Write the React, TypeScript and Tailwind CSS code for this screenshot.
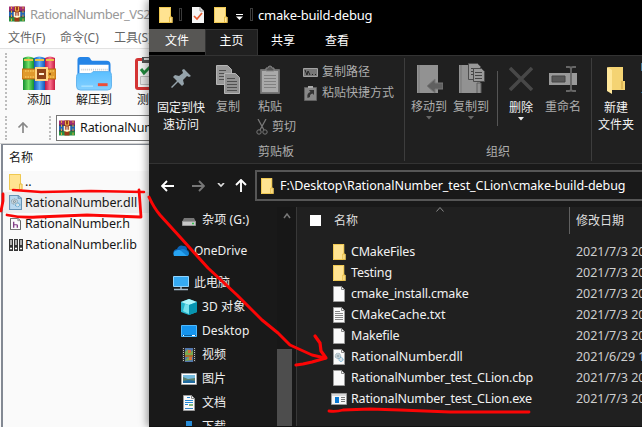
import type { ReactNode } from 'react';

const cjk = 'font-["Noto_Sans","Noto_Sans_CJK_SC",sans-serif]';

function Label({ children, className = '' }: { children: ReactNode; className?: string }) {
  return <span className={`block whitespace-nowrap leading-4 ${className}`}>{children}</span>;
}

function Folder({ className = 'w-4 h-4' }: { className?: string }) {
  return (
    <svg viewBox="0 0 14 16" preserveAspectRatio="none" className={`block shrink-0 ${className}`}>
      <path d="M0 0h12v10h1.500v6H0z" fill="#ffe391" />
      <path d="M.5.5h11V10M.5 0v15.500h12" fill="none" stroke="#efc850" />
      <path d="M10.500 10h2.500v5.500h-2.500z" fill="#ffe69b" stroke="#e7bc45" />
    </svg>
  );
}

function Books({ className }: { className: string }) {
  return (
    <svg viewBox="0 0 32 32" className={`block shrink-0 ${className}`}>
      <path d="M0 1h32v9H0z" fill="#a22d72" />
      <path d="M0 11h32v10H0z" fill="#2365b3" />
      <path d="M0 22h32v9H0z" fill="#279242" />
      <path d="M0 10.5h32M0 21.5h32" stroke="#29223c" strokeWidth="2" />
      <path d="M5 1v30M28 1v30" stroke="#e5ac3b" strokeWidth="2" strokeDasharray="5 3" />
      <path d="M11 1h10v30H11z" fill="#9c3a18" />
      <path d="M13 1v9h6V1M13 23h6" fill="none" stroke="#e9b047" strokeWidth="2" />
      <path d="M11 12v9h10v-9" fill="none" stroke="#fff2cf" strokeWidth="3" />
      <path d="M16 13v10" stroke="#fff" strokeWidth="2" />
    </svg>
  );
}

function ArchiveIcon() {
  return (
    <svg viewBox="0 0 34 35" className="block h-[35px] w-[34px] shrink-0">
      <defs>
        <linearGradient id="gr"><stop stopColor="#128d30" /><stop offset=".5" stopColor="#72df66" /><stop offset="1" stopColor="#149231" /></linearGradient>
        <linearGradient id="bl"><stop stopColor="#1057b8" /><stop offset=".5" stopColor="#5cadf8" /><stop offset="1" stopColor="#1458b7" /></linearGradient>
        <linearGradient id="rd"><stop stopColor="#bd1748" /><stop offset=".5" stopColor="#fb718d" /><stop offset="1" stopColor="#c71b42" /></linearGradient>
      </defs>
      <path d="M1 2q5-3 11 0v32H1z" fill="url(#gr)" />
      <path d="M12 2q5-3 11 0v32H12z" fill="url(#bl)" />
      <path d="M23 2q5-3 10 0v32H23z" fill="url(#rd)" />
      <path d="M2 4h9M13 4h9M24 4h8" stroke="#e8c448" strokeWidth="2" />
      <path d="M0 13h34v10H0z" fill="#e09a2d" stroke="#b9670f" />
      <path d="M3 15h29M3 21h29" stroke="#ffdb74" strokeDasharray="1.5 1" />
      <path d="M14 12h11v12H14z" fill="#8d4419" stroke="#ffd783" strokeWidth="2" />
      <path d="M17 18h5" stroke="#fff2d3" strokeWidth="2" />
      <circle cx="28" cy="18" r="1" fill="#76400d" />
    </svg>
  );
}

function ExtractIcon() {
  return (
    <svg viewBox="0 0 36 36" className="block h-[35px] w-9 shrink-0">
      <defs><linearGradient id="ef" x2="0" y2="1"><stop stopColor="#5abfff" /><stop offset="1" stopColor="#84d0ff" /></linearGradient></defs>
      <path d="M1 7V4q0-3 3-3h8q2 0 3 3l1 1h15q4 0 4 4v16H1z" fill="#2585e7" />
      <path d="M3 9h30v16H3z" fill="#fff" />
      <path d="M5 14h27" stroke="#c7ccd1" strokeWidth="2" strokeDasharray="1 1" />
      <path d="M3 18h11q2 0 3-2h16q3 0 3 4v11q0 4-4 4H4q-4 0-4-4V21q0-3 3-3z" fill="url(#ef)" stroke="#63b4ed" />
      <path d="M22 29.500h10" stroke="#ed4d38" strokeWidth="3" />
      <path d="M5 31h12" stroke="#c0ebff" />
    </svg>
  );
}

function TestIcon() {
  return (
    <svg viewBox="0 0 28 35" className="block h-[35px] w-7 shrink-0">
      <rect x="0" y="2" width="28" height="32" rx="3" fill="#d43434" />
      <path d="M3 5h22v26H3z" fill="#f5f5f5" />
      <path d="M7 1h14v6H7z" fill="#555" />
      <path d="M9 3h10" stroke="#ddd" strokeWidth="2" />
      <path d="M5.500 20.500h9v8h-9z" fill="#e8e8e8" stroke="#bbb" />
      <path d="m6 13 3 4 8-8" fill="none" stroke="#218a3d" strokeWidth="3" />
    </svg>
  );
}

type PageKind = 'blank' | 'text' | 'dll' | 'blueDll' | 'word' | 'header';
function Page({ kind = 'blank', className = 'w-3 h-4' }: { kind?: PageKind; className?: string }) {
  const blue = kind === 'blueDll';
  return (
    <svg viewBox="0 0 12 16" preserveAspectRatio="none" className={`block shrink-0 ${className}`}>
      <path d="M.5.5h8l3 3v12H.5z" fill={blue ? '#b9d8ef' : '#fafafa'} stroke={blue ? '#6693b5' : kind === 'header' ? '#444' : '#9b9b9b'} />
      <path d="M8.5.5v3h3" fill="none" stroke={blue ? '#6693b5' : '#888'} />
      {kind === 'text' && <path d="M2 4.5h5M2 6.5h8M2 8.5h8M2 10.5h8M2 12.5h8" stroke="#888" />}
      {(kind === 'dll' || blue) && (
        <g fill="#d6e2e8" stroke="#8297a2">
          <circle cx="5" cy="7" r="2.7" strokeDasharray="1 .5" /><circle cx="5" cy="7" r="1" fill="#fff" />
          <circle cx="8" cy="10.5" r="2" stroke="#5ca4cc" strokeDasharray="1 .5" />
        </g>
      )}
      {kind === 'header' && <path d="M4 5v8M4 9h3q1 0 1 1v3" fill="none" stroke="#813d85" strokeWidth="1.5" />}
      {kind === 'word' && <><path d="M4 2.5h3M2 5.5h8M2 7.5h8M2 9.5h3" stroke="#2488d5" /><path d="M6 9h4v2H6z" fill="#82b778" /><path d="M2 13.5h8" stroke="#3584c5" /></>}
    </svg>
  );
}

function LibIcon() {
  return (
    <svg viewBox="0 0 14 12" className="block h-3 w-3.5 shrink-0">
      <path d="M0 0h4v12H0zM5 0h4v12H5zM10 0h4v12h-4z" fill="#343434" />
      <path d="M2 1v5M7 1v5M12 1v5" stroke="#fff" strokeWidth="1.2" />
      <path d="M1 9.5h2M6 9.5h2M11 9.5h2" stroke="#fff" strokeWidth="1.5" />
    </svg>
  );
}

function Dots({ className = '' }: { className?: string }) {
  return <div className={`w-0 shrink-0 border-l-2 border-dotted border-[#bdbdbd] ${className}`} />;
}

function ArchiveWindow() {
  const files = [
    { name: '..', icon: <Folder className="h-4 w-[14px]" />, spacing: '' },
    { name: 'RationalNumber.dll', icon: <Page kind="blueDll" className="h-[15px] w-[13px]" />, spacing: 'tracking-[-.01px]' },
    { name: 'RationalNumber.h', icon: <Page kind="header" className="h-3 w-[11px]" />, spacing: 'tracking-[-.06px]' },
    { name: 'RationalNumber.lib', icon: <LibIcon />, spacing: 'tracking-[-.03px]' },
  ];
  return (
    <section className="flex h-full w-[149px] shrink-0 flex-col overflow-hidden bg-[#fafafa] text-[#161616]">
      <header className="flex h-7 shrink-0 items-center gap-[5px] bg-white pl-[9px]">
        <Books className="h-4 w-4" />
        <Label className="text-[13px] tracking-[-.48px] text-[#999]">RationalNumber_VS2</Label>
      </header>
      <nav className="flex h-5 shrink-0 items-center bg-white pl-2 text-[12px] text-[#666]">
        <Label className="w-[52px] shrink-0">文件(F)</Label><Label className="w-[54px] shrink-0">命令(C)</Label><Label>工具(S)</Label>
      </nav>
      <div className="flex h-16 shrink-0 border-t border-[#e2e2e2] pl-[5px] pt-1">
        <Dots className="h-[57px]" />
        <div className="ml-[14px] flex w-9 shrink-0 flex-col items-center pt-[3px]"><ArchiveIcon /><Label className="mt-px text-[12px]">添加</Label></div>
        <div className="ml-[19px] flex w-9 shrink-0 flex-col items-center pt-[3px]"><ExtractIcon /><Label className="mt-px text-[12px]">解压到</Label></div>
        <div className="ml-[23px] flex w-7 shrink-0 flex-col pt-[3px]"><TestIcon /><Label className="mt-px pl-0.5 text-[12px]">测试</Label></div>
      </div>
      <div className="flex h-8 shrink-0 items-center border-b border-[#d2d2d2] pl-[5px]">
        <Dots className="h-6" />
        <svg viewBox="0 0 12 12" className="ml-[10px] h-3 w-3 shrink-0"><path d="M6 11V1M1.5 5.5 6 1l4.500 4.500" fill="none" stroke="#888" strokeWidth="1.7" /></svg>
        <Dots className="ml-5 h-6" />
        <div className="ml-[5px] flex h-[26px] w-28 shrink-0 items-center gap-[5px] border border-[#777] bg-white pl-0.5"><Books className="h-4 w-4" /><Label className="text-[12.500px] tracking-[-.1px]">RationalNumber</Label></div>
      </div>
      <div className="ml-px flex-1 border-l-2 border-t border-[#838993]">
        <div className="flex h-[26px] items-center bg-white pl-[6px]"><Label className="text-[12px]">名称</Label></div>
        {files.map((f, i) => (
          <div key={f.name} className={`flex h-[21px] items-center pl-[4px] ${i === 1 ? 'bg-[#eee]' : 'bg-[#fafafa]'}`}>
            <span className="flex w-[17px] shrink-0 items-center justify-center">{f.icon}</span>
            <Label className={`ml-px text-[12.500px] ${f.spacing}`}>{f.name}</Label>
          </div>
        ))}
      </div>
    </section>
  );
}

function CopyIcon() {
  return (
    <svg viewBox="0 0 24 29" className="h-[29px] w-6">
      <path d="M.5.5h11l4 4v15H.5z" fill="#999" stroke="#b5b5b5" /><path d="M3 5.5h7M3 8.500h8M3 11.500h8M3 14.500h8" stroke="#505050" />
      <path d="M8.500 8.500h11l4 4v16h-15z" fill="#929292" stroke="#b5b5b5" /><path d="M11 13.500h8M11 16.500h10M11 19.500h10M11 22.500h10M11 25.500h10" stroke="#505050" />
    </svg>
  );
}

function PasteIcon() {
  return (
    <svg viewBox="0 0 20 29" className="h-[29px] w-5">
      <path d="M.5 4.500h19v24H.5z" fill="#777" stroke="#6b6b6b" /><path d="M2 6h16v21H2z" fill="#aaa" />
      <path d="M6 6V3h2q0-2 2-2t2 2h2v3z" fill="#555" stroke="#888" /><path d="M4 10.500h12M4 13.500h12M4 16.500h12M4 19.500h12M4 22.500h12" stroke="#818181" />
    </svg>
  );
}

function TargetIcon({ copy = false }: { copy?: boolean }) {
  return (
    <svg viewBox="0 0 27 31" className="h-[31px] w-[27px]">
      <path d="M1 2h21v28H1z" fill="#929292" /><path d="M3 2v28" stroke="#777" />
      {copy ? <><path d="M10.500.5h9l3 3v13h-12z" fill="#999" stroke="#4d4d4d" /><path d="M13 5.500h7M13 8.500h7M13 11.500h7" stroke="#444" /><path d="M15.500 5.500h8l3 3v10h-11z" fill="#999" stroke="#4b4b4b" /><path d="M17 9.500h7M17 12.500h7M17 15.500h7" stroke="#444" /><path d="M19 30V20h4v10" fill="#909090" stroke="#5e5e5e" /></> : <path d="m11 23 8-7v4h8v6h-8v4z" fill="#606060" stroke="#777" />}
    </svg>
  );
}

function Caret({ bright = false }: { bright?: boolean }) {
  return <svg viewBox="0 0 6 4" className="mt-px h-1 w-1.5"><path d="M0 0h6L3 3.500z" fill={bright ? '#eee' : '#666'} /></svg>;
}

function Ribbon() {
  return (
    <div className="flex h-[109px] shrink-0 overflow-hidden border-y border-[#333] bg-[#202020] text-[12px] text-[#adadad]">
      <div className="flex w-[255px] shrink-0 flex-col">
        <div className="flex h-[88px]">
          <div className="flex w-[64px] flex-col items-center pt-3 text-[#f3f3f3]">
            <svg viewBox="0 0 22 22" className="h-[22px] w-[22px]"><path d="m14 1 7 7-2 1-2-1-4 4 1 4-2 2-4-4-6 6-1-1 6-6-4-4 2-2 4 1 4-3-1-3z" fill="#95a3ab" /></svg>
            <Label className="mt-[10px]">固定到快</Label><Label className="mt-px">速访问</Label>
          </div>
          <div className="ml-[2px] flex w-[26px] flex-col items-center pt-[9px]"><CopyIcon /><Label className="mt-[5px]">复制</Label></div>
          <div className="ml-[9px] flex w-[48px] flex-col pt-[9px]">
            <div className="pl-[10px]"><PasteIcon /></div><Label className="mt-[5px] pl-2">粘贴</Label>
            <div className="mt-1 flex items-center gap-1 pl-1.5">
              <svg viewBox="0 0 12 16" className="h-4 w-3 shrink-0"><path d="m2 0 6 11M10 0 4 11" stroke="#777" strokeWidth="1.300" /><circle cx="3" cy="13" r="2.200" fill="none" stroke="#777" /><circle cx="9" cy="13" r="2.200" fill="none" stroke="#777" /></svg>
              <Label>剪切</Label>
            </div>
          </div>
          <div className="ml-[5px] flex flex-col gap-[5px] pt-2">
            <div className="flex h-4 items-center gap-1"><svg viewBox="0 0 15 9" className="h-[9px] w-[15px]"><path d="M.5.5h14v8H.5z" fill="#777" stroke="#a3a3a3" /><path d="m2 2 2 5 1-4 2 4M9 6.500h1M12 6.500h1" fill="none" stroke="#222" /></svg><Label>复制路径</Label></div>
            <div className="flex h-4 items-center gap-1"><svg viewBox="0 0 15 16" className="h-4 w-[15px]"><path d="M1.500 2.500h12v13h-12z" fill="#888" stroke="#606060" /><path d="M5 2h5" stroke="#aaa" strokeWidth="2" /><path d="M4.500 13q-1-5 3-6L6 5h5v5L9.500 8.500Q6.500 9 7 12z" fill="#333" /></svg><Label>粘贴快捷方式</Label></div>
          </div>
        </div>
        <Label className="pl-[109px]">剪贴板</Label>
      </div>
      <div className="my-[2px] w-px shrink-0 bg-[#3d3d3d]" />
      <div className="flex w-[186px] shrink-0 flex-col items-center">
        <div className="flex h-[88px] w-full">
          <div className="ml-1.5 flex w-9 flex-col items-center pt-[7px]"><TargetIcon /><Label className="mt-[5px]">移动到</Label><Caret /></div>
          <div className="ml-1.5 flex w-9 flex-col items-center pt-[7px]"><TargetIcon copy /><Label className="mt-[5px]">复制到</Label><Caret /></div>
          <div className="ml-2 mt-[15px] h-[55px] w-px bg-[#555]" />
          <div className="ml-[9px] flex w-7 flex-col items-center pt-[11px] text-[#f0f0f0]"><svg viewBox="0 0 24 24" className="h-6 w-6"><path d="m1 1 22 22M23 1 1 23" stroke="#484848" strokeWidth="3.500" /></svg><Label className="mt-[9px]">删除</Label><Caret bright /></div>
          <div className="ml-2 flex w-10 flex-col items-center pt-[10px]"><svg viewBox="0 0 28 26" className="h-[26px] w-7"><path d="M0 7h28v12H0z" fill="#999" /><path d="M3 10h13v6H3z" fill="#585858" stroke="#444" /><path d="M17 1h3q2 0 2 2v20q0 2-2 2h-3M27 1h-3q-2 0-2 2v20q0 2 2 2h3" fill="none" stroke="#666" strokeWidth="1.800" /></svg><Label className="mt-[7px]">重命名</Label></div>
        </div>
        <Label>组织</Label>
      </div>
      <div className="my-[2px] w-px shrink-0 bg-[#3d3d3d]" />
      <div className="ml-[4px] flex w-10 shrink-0 flex-col items-center pt-[11px] text-[#f3f3f3]">
        <svg viewBox="0 0 20 28" className="h-7 w-5"><path d="M2 0h15v14h2v9H6z" fill="#f4d373" /><path d="m1 0 5 3v24l-5-3z" fill="#ffe79a" /><path d="M16 14v8" stroke="#ca9e3c" /></svg>
        <Label className="mt-[5px]">新建</Label><Label className="mt-px">文件夹</Label>
      </div>
      <div className="ml-[5px] flex w-3 shrink-0 flex-col pt-[7px]"><div className="h-2 bg-[#447a9b]" /><div className="mt-[21px] h-px bg-[#1b5b88]" /></div>
    </div>
  );
}

function Ico({ children }: { children: ReactNode }) {
  return <svg viewBox="0 0 16 16" className="block h-4 w-4 shrink-0">{children}</svg>;
}

function Sidebar() {
  const children = [
    { name: '3D 对象', icon: <Ico><path d="m0 3 8-3 8 3v10l-8 3-8-3z" fill="#27b6cd" /><path d="m0 3 8 3 8-3-8-3z" fill="#aff5fa" /><path d="M8 6v10l8-3V3z" fill="#0794b0" /><path d="m4 5-2 7 6 3V6z" fill="#75e1ec" /></Ico> },
    { name: 'Desktop', icon: <Ico><path d="M.5 2.500h15v11H.5z" fill="#1594ed" stroke="#4db9ff" /><path d="M1 12.500h14" stroke="#075f9d" /><path d="M2 12.500h1m8 0h3" stroke="white" /></Ico> },
    { name: '视频', icon: <Ico><path d="M1 1h14v14H1z" fill="#5276ae" /><path d="M4 6h8v4H4z" fill="#a56e30" /><path d="m4 5 3-3 2 4 3-3v5H4zM4 14l3-4 5 3" fill="#7da94f" /><path d="M7 3h3v3H7zM8 10h3v3H8z" fill="#d6723b" /><path d="M2.500 1v14M13.500 1v14" stroke="#292929" strokeWidth="3" /><path d="M2.500 1v14M13.500 1v14" stroke="#bbb" strokeDasharray="1 1" /></Ico> },
    { name: '图片', icon: <Ico><path d="M.5 2.500h15v11H.5z" fill="#fff" stroke="#a4a4a4" /><path d="M2 4h12v8H2z" fill="#75bbde" /><path d="m2 6 5 2 7-1v5H2z" fill="#5a806e" /><path d="m2 10 6-1 6 1v2H2z" fill="#206ba0" /></Ico> },
    { name: '文档', icon: <Page kind="word" /> },
    { name: '下载', icon: <Ico><path d="M5 2h6v8h4l-7 6-7-6h4z" fill="#268bd7" /></Ico> },
  ];
  return (
    <aside className="w-[128px] shrink-0 overflow-hidden bg-[#191919] text-[12px] text-[#f0f0f0]">
      <div className="flex h-[25px] items-center gap-[6px] pl-[33px]">
        <svg viewBox="0 0 14 8" className="mt-1 h-2 w-3.5"><path d="m2 0-2 4h14l-2-4z" fill="#777" /><path d="M.5 3.500h13v4H.5z" fill="#c7c7c7" stroke="#999" /><path d="M10 5.500h2" stroke="#31c34d" strokeWidth="1.500" /></svg>
        <Label className="tracking-[.15px]">杂项 (G:)</Label>
      </div>
      <div className="mt-[7px] flex h-6 items-center gap-[5px] pl-6"><Ico><path d="M1 12q-2-5 3-6 2-5 7-3 3 0 3 4 3 1 1 5z" fill="#0c64b5" /><path d="M1 13q-2-5 4-6 6-1 10 6z" fill="#28a5f3" /><path d="M7 7q4-3 9 3 0 3-2 3z" fill="#1482d2" /></Ico><Label>OneDrive</Label></div>
      <div className="mt-2 flex h-6 items-center gap-[5px] pl-6"><Ico><path d="M.5 1.500h15v10H.5z" fill="#35aaf3" stroke="#91d5ff" /><path d="M8 12v2M1 14.500h14" stroke="#a5bbcc" strokeWidth="1.500" /></Ico><Label>此电脑</Label></div>
      {children.map((item) => <div key={item.name} className="flex h-6 items-center gap-[5px] pl-8"><span className="flex w-4 shrink-0 justify-center">{item.icon}</span><Label className="tracking-[.1px]">{item.name}</Label></div>)}
    </aside>
  );
}

function FileList() {
  const files: { name: string; icon: PageKind | 'folder' | 'exe'; date: string }[] = [
    { name: 'CMakeFiles', icon: 'folder', date: '2021/7/3 20' },
    { name: 'Testing', icon: 'folder', date: '2021/7/3 20' },
    { name: 'cmake_install.cmake', icon: 'blank', date: '2021/7/3 20' },
    { name: 'CMakeCache.txt', icon: 'text', date: '2021/7/3 20' },
    { name: 'Makefile', icon: 'blank', date: '2021/7/3 20' },
    { name: 'RationalNumber.dll', icon: 'dll', date: '2021/6/29 1' },
    { name: 'RationalNumber_test_CLion.cbp', icon: 'blank', date: '2021/7/3 20' },
    { name: 'RationalNumber_test_CLion.exe', icon: 'exe', date: '2021/7/3 20' },
  ];
  const spacing: Record<string, string> = {
    'RationalNumber.dll': 'tracking-[-.03px]',
    'cmake_install.cmake': 'tracking-[-.16px]',
    'CMakeCache.txt': 'tracking-[-.02px]',
  };
  return (
    <main className="w-[346px] shrink-0 overflow-hidden border-l border-[#383838] bg-[#202020] text-[12.500px]">
      <div className="flex h-[34px] text-[12px] text-[#dedede]">
        <div className="ml-[13px] mt-2 h-[11px] w-[11px] shrink-0 bg-white" />
        <Label className="ml-[13px] mt-[6px] w-[102px] shrink-0">名称</Label>
        <svg viewBox="0 0 8 5" className="h-[5px] w-2 shrink-0"><path d="m.5 4.500 3.500-4 3.500 4" fill="none" stroke="#888" /></svg>
        <div className="ml-[125px] h-[27px] w-px shrink-0 bg-[#606060]" />
        <Label className="ml-[6px] mt-[6px]">修改日期</Label>
      </div>
      {files.map((f) => (
        <div key={f.name} className="flex h-[21px] items-center pl-[34px] text-[#f2f2f2]">
          <span className="flex w-4 shrink-0 justify-center">
            {f.icon === 'folder' ? <Folder className="h-4 w-[13px]" /> : f.icon === 'exe' ? <svg viewBox="0 0 16 12" className="h-3 w-4"><path d="M.5.5h15v11H.5z" fill="#f5f5f5" stroke="#999" /><path d="M1 2h14" stroke="#bbb" /><path d="M4 4h4v6H4z" fill="#0877d1" /><path d="M10 4.500h4M10 6.500h4M10 8.500h4" stroke="#777" /></svg> : <Page kind={f.icon} />}
          </span>
          <Label className={`ml-1 w-[225px] shrink-0 ${spacing[f.name] ?? 'tracking-[-.2px]'}`}>{f.name}</Label>
          <Label className="tracking-[-.03px] text-[#cecece]">{f.date}</Label>
        </div>
      ))}
    </main>
  );
}

function Explorer() {
  return (
    <section className="relative flex h-full w-[493px] shrink-0 flex-col overflow-hidden bg-[#202020] text-white shadow-[-2px_0_8px_rgba(0,0,0,.4)]">
      <header className="flex h-[29px] shrink-0 items-center bg-black pl-[10px]">
        <Folder className="h-4 w-[14px]" />
        <div className="ml-[6px] h-[13px] w-[3px] border border-[#3b3b3b]" />
        <svg viewBox="0 0 12 16" className="ml-[10px] h-4 w-3"><path d="M0 0h8l4 4v12H0z" fill="#f5f5f5" /><path d="M8 0v4h4" fill="none" stroke="#999" /><path d="m2 9 3 3 5-6" fill="none" stroke="#e65b30" strokeWidth="1.700" /></svg>
        <Folder className="ml-[10px] h-4 w-[14px]" />
        <svg viewBox="0 0 7 6" className="ml-2 mt-1 h-1.5 w-[7px]"><path d="M0 .5h7" stroke="#fff" /><path d="M0 2.500h7L3.500 6z" fill="#fff" /></svg>
        <div className="ml-[7px] h-[13px] w-[3px] border border-[#3b3b3b]" />
        <Label className="ml-[5px] text-[13px] tracking-[-.25px]">cmake-build-debug</Label>
      </header>
      <nav className="flex h-[26px] shrink-0 bg-black text-center text-[12px]">
        <div className="mb-[3px] w-[56px] bg-[#575654] pt-1"><Label>文件</Label></div>
        <div className="w-[53px] border-x border-t border-[#333] bg-[#202020] pt-[3px]"><Label>主页</Label></div>
        <div className="w-[50px] pt-1"><Label>共享</Label></div><div className="ml-0.5 w-[54px] pt-1"><Label>查看</Label></div>
      </nav>
      <Ribbon />
      <div className="flex h-[43px] shrink-0 items-center bg-[#191919] pl-[12px]">
        <svg viewBox="0 0 14 12" className="h-3 w-[14px] shrink-0"><path d="M13 6H1m5-5L1 6l5 5" fill="none" stroke="#fff" strokeWidth="1.900" /></svg>
        <svg viewBox="0 0 14 12" className="ml-4 h-3 w-[14px] shrink-0"><path d="M1 6h12M8 1l5 5-5 5" fill="none" stroke="#777" strokeWidth="1.900" /></svg>
        <svg viewBox="0 0 8 5" className="ml-3 h-[5px] w-2 shrink-0"><path d="m1 0 3 3 3-3" fill="none" stroke="#ddd" strokeWidth="1.700" /></svg>
        <svg viewBox="0 0 12 14" className="ml-[10px] h-3.5 w-3 shrink-0"><path d="M6 13V1M1 6l5-5 5 5" fill="none" stroke="#fff" strokeWidth="1.900" /></svg>
        <div className="ml-[8px] flex h-[31px] w-[390px] shrink-0 items-center border-2 border-[#565656] bg-[#191919] pl-1"><Folder className="h-4 w-[13px]" /><Label className="ml-[6px] text-[12.500px] tracking-[-.07px]">F:\Desktop\RationalNumber_test_CLion\cmake-build-debug</Label></div>
      </div>
      <div className="flex min-h-0 flex-1">
        <Sidebar />
        <div className="flex w-[19px] shrink-0 flex-col items-center bg-[#171717]">
          <svg viewBox="0 0 8 6" className="mt-1.5 h-1.5 w-2 shrink-0"><path d="m1 5 3-4 3 4" fill="none" stroke="#777" strokeWidth="1.500" /></svg>
          <div className="mr-1 mt-[130px] h-[78px] w-[15px] shrink-0 bg-[#4d4d4d]" />
        </div>
        <FileList />
      </div>
      <div className="h-px shrink-0 bg-[#111]" />
    </section>
  );
}

export default function App() {
  return (
    <div className={`relative flex h-[427px] w-[642px] overflow-hidden ${cjk}`}>
      <ArchiveWindow />
      <Explorer />
      <svg viewBox="0 0 642 427" className="pointer-events-none absolute inset-0 h-full w-full" fill="none" stroke="#fb0505" strokeLinecap="round" strokeLinejoin="round">
        <path d="M13 190 41 192 91 191 144 192" strokeWidth="2.500" />
        <path d="M3 194v7l-2 10M139 190l1 13 1 14" strokeWidth="2.800" />
        <path d="M7 215q14 3 30 2l50-2 53 2" strokeWidth="2.800" />
        <path d="M149 197q5 11 11 18l20 22 28 31 29 27 8 8 17 17 16 13 12 12 22 10 13 3" strokeWidth="3" />
        <path d="m315 336 5 7 1 8 5 7-14 4-9 2-7 1" strokeWidth="3.200" />
        <path d="M329 411q7 1 14-1l27-1 30 1 50 2h79" strokeWidth="2.800" />
      </svg>
    </div>
  );
}
